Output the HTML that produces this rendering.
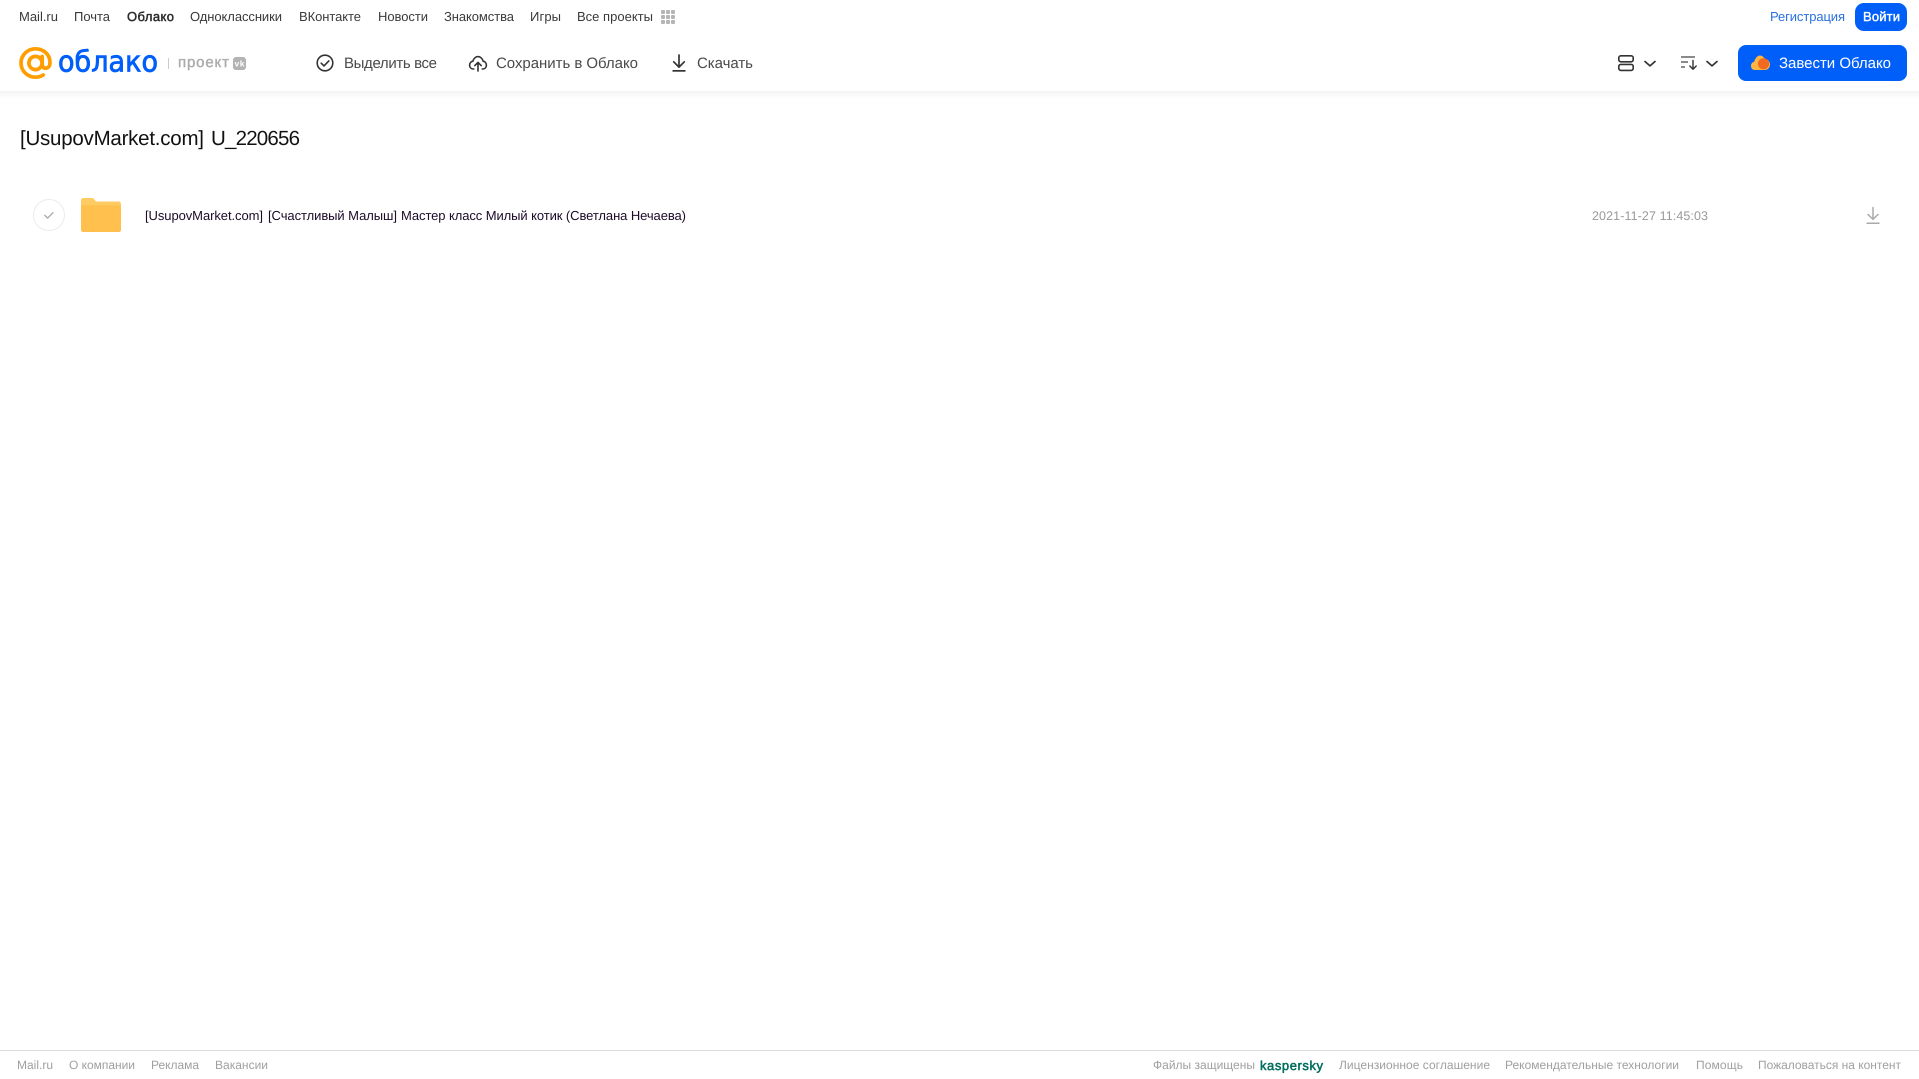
<!DOCTYPE html>
<html lang="ru"><head><meta charset="utf-8"><title>Облако</title>
<style>
html,body{margin:0;padding:0;background:#fff;width:1919px;height:1079px;overflow:hidden}
svg{display:block;position:absolute;left:0;top:0}
text{font-family:"Liberation Sans",Arial,sans-serif;text-rendering:geometricPrecision}
.n{font-size:13px;fill:#3a3a3a}
.a{font-size:15px;fill:#4a4a4a}
.f{font-size:12px;fill:#a0a0a0}
</style></head><body>
<svg width="1919" height="1079" viewBox="0 0 1919 1079" xmlns="http://www.w3.org/2000/svg">
<defs>
<linearGradient id="sh" x1="0" y1="0" x2="0" y2="1"><stop offset="0" stop-color="#f4f4f4"/><stop offset="1" stop-color="#fff"/></linearGradient>
</defs>
<rect x="0" y="91" width="1919" height="8" fill="url(#sh)"/>
<!-- top nav -->
<text class="n" x="19" y="21" textLength="39">Mail.ru</text>
<text class="n" x="74" y="21" textLength="36">Почта</text>
<text class="n" x="127" y="21" textLength="47" style="fill:#2a2a2a;stroke:#2a2a2a;stroke-width:.45">Облако</text>
<text class="n" x="190" y="21" textLength="92">Одноклассники</text>
<text class="n" x="299" y="21" textLength="62">ВКонтакте</text>
<text class="n" x="378" y="21" textLength="50">Новости</text>
<text class="n" x="444" y="21" textLength="70">Знакомства</text>
<text class="n" x="530" y="21" textLength="31">Игры</text>
<text class="n" x="577" y="21" textLength="76">Все проекты</text>
<g fill="#b5b5b5">
<rect x="661" y="10" width="4" height="4" rx="1"/><rect x="666" y="10" width="4" height="4" rx="1"/><rect x="671" y="10" width="4" height="4" rx="1"/>
<rect x="661" y="15" width="4" height="4" rx="1"/><rect x="666" y="15" width="4" height="4" rx="1"/><rect x="671" y="15" width="4" height="4" rx="1"/>
<rect x="661" y="20" width="4" height="4" rx="1"/><rect x="666" y="20" width="4" height="4" rx="1"/><rect x="671" y="20" width="4" height="4" rx="1"/>
</g>
<text x="1770" y="21" font-size="13" fill="#2a70e0" textLength="75">Регистрация</text>
<rect x="1855" y="3" width="52" height="28" rx="9" fill="#005ff9"/>
<text x="1863" y="21" font-size="13" fill="#fff" stroke="#fff" stroke-width=".4" textLength="37">Войти</text>
<!-- logo -->
<g fill="none" stroke="#ff9e00">
<circle cx="35.5" cy="63" r="6.6" stroke-width="3.7"/>
<path d="M42.2 56.5V64.5C42.2 69.8 50 69.8 50 62.5C50 54.5 43.5 48.8 35.5 48.8C27.5 48.8 21 55.2 21 63C21 71 27.5 77.2 35.5 77.2C38.6 77.2 41 76.4 43.2 75" stroke-width="3.7" stroke-linecap="round"/>
</g>
<text x="58" y="71.5" font-size="29" fill="#005ff9" stroke="#005ff9" stroke-width=".8" textLength="100" lengthAdjust="spacingAndGlyphs" style="font-family:'DejaVu Sans',sans-serif">облако</text>
<rect x="168" y="58" width="1" height="11" fill="#ccc"/>
<text x="178" y="67" font-size="15" fill="#ababab" stroke="#ababab" stroke-width=".4" textLength="51">проект</text>
<rect x="233" y="57" width="13" height="13" rx="3" fill="#b3b3b3"/>
<text x="234.5" y="66.5" font-size="8.5" font-weight="700" fill="#fff" textLength="10">vk</text>
<!-- actions -->
<circle cx="325" cy="63" r="7.8" fill="none" stroke="#333" stroke-width="1.6"/>
<path d="M321.2 63.2l2.8 2.7 4.8-5" fill="none" stroke="#333" stroke-width="1.6" stroke-linecap="round" stroke-linejoin="round"/>
<text class="a" x="344" y="68" textLength="93">Выделить все</text>
<path d="M473.8 69H473.5C471 69 469.6 67.2 469.6 65.2C469.6 63 471 61.5 472.9 61.2C473.5 58.6 475.6 56.6 478 56.6C480.4 56.6 482.5 58.6 483.1 61.2C485 61.5 486.4 63 486.4 65.2C486.4 67.2 485 69 482.5 69H482.2" fill="none" stroke="#333" stroke-width="1.6" stroke-linecap="round"/>
<path d="M478 71V62.5M474.8 65.6L478 62.4L481.2 65.6" fill="none" stroke="#333" stroke-width="1.6" stroke-linecap="round" stroke-linejoin="round"/>
<text class="a" x="496" y="68" textLength="142">Сохранить в Облако</text>
<path d="M679 55V67M673.7 61.8L679 67.1L684.3 61.8" fill="none" stroke="#333" stroke-width="1.7" stroke-linecap="round" stroke-linejoin="round"/>
<rect x="672.5" y="70" width="13" height="1.7" fill="#333"/>
<text class="a" x="697" y="68" textLength="56">Скачать</text>
<!-- right controls -->
<rect x="1618.8" y="55.8" width="14.4" height="6" rx="2" fill="none" stroke="#333" stroke-width="1.6"/>
<rect x="1618.8" y="64.4" width="14.4" height="6" rx="2" fill="none" stroke="#333" stroke-width="1.6"/>
<path d="M1645 61.5l5 4.4 5-4.4" fill="none" stroke="#333" stroke-width="1.7" stroke-linecap="round" stroke-linejoin="round"/>
<path d="M1681 57h14M1681 62h7M1681 67h4" fill="none" stroke="#444" stroke-width="1.3"/>
<path d="M1693 60.5v8.5M1689.8 66l3.2 3.2 3.2-3.2" fill="none" stroke="#333" stroke-width="1.4" stroke-linecap="round" stroke-linejoin="round"/>
<path d="M1707 61.5l5 4.4 5-4.4" fill="none" stroke="#333" stroke-width="1.7" stroke-linecap="round" stroke-linejoin="round"/>
<rect x="1738" y="45" width="169" height="36" rx="8" fill="#005ff9"/>
<path d="M1755 70C1752.5 70 1751 68.2 1751 66C1751 63.8 1752.4 62.2 1754.2 61.8C1755 58.8 1757 55.5 1760 55.5C1762.2 55.5 1763.8 57 1764.6 58.8C1767.6 59 1770 61.6 1770 64.6C1770 67.6 1767.6 70 1764.6 70Z" fill="#ffb53f"/>
<circle cx="1763.5" cy="63.8" r="5.6" fill="#f26a21"/>
<text x="1779" y="68" font-size="15" fill="#fff" textLength="112">Завести Облако</text>
<!-- title -->
<text x="20" y="145" font-size="20.5" fill="#111" textLength="184">[UsupovMarket.com]</text>
<text x="211" y="145" font-size="20.5" fill="#111" textLength="89">U_220656</text>
<!-- row -->
<circle cx="49" cy="215" r="15.5" fill="#fff" stroke="#ececec" stroke-width="1"/>
<path d="M44.8 215.3l2.9 2.8 5.3-5.4" fill="none" stroke="#a6a6a6" stroke-width="1.3" stroke-linecap="round" stroke-linejoin="round"/>
<path d="M81 200.5C81 199 82 198 83.5 198H91.5C93 198 93.8 198.6 94.6 199.6L95.8 201.5H118.5C120 201.5 121 202.5 121 204V229.5C121 231 120 232 118.5 232H83.5C82 232 81 231 81 229.5Z" fill="#ffcb63"/>
<path d="M81 207.5C81 206.3 82 205.3 83.2 205.3H118.8C120 205.3 121 206.3 121 207.5V229.5C121 231 120 232 118.5 232H83.5C82 232 81 231 81 229.5Z" fill="#ffc04e"/>
<text x="145" y="220" font-size="13" fill="#1c0a28" textLength="118">[UsupovMarket.com]</text>
<text x="268" y="220" font-size="13" fill="#1c0a28" textLength="129">[Счастливый Малыш]</text>
<text x="401" y="220" font-size="13" fill="#1c0a28" textLength="285">Мастер класс Милый котик (Светлана Нечаева)</text>
<text x="1592" y="220" font-size="12.5" fill="#999" textLength="116">2021-11-27 11:45:03</text>
<path d="M1873 207.5V219M1868 214.5L1873 219.3L1878 214.5" fill="none" stroke="#aaa" stroke-width="1.5" stroke-linecap="round" stroke-linejoin="round"/>
<rect x="1866.5" y="222.5" width="13" height="1.5" fill="#aaa"/>
<!-- footer -->
<rect x="0" y="1050" width="1919" height="1" fill="#dcdcdc"/>
<text class="f" x="17" y="1069" textLength="36">Mail.ru</text>
<text class="f" x="69" y="1069" textLength="66">О компании</text>
<text class="f" x="151" y="1069" textLength="48">Реклама</text>
<text class="f" x="215" y="1069" textLength="53">Вакансии</text>
<text class="f" x="1153" y="1069" textLength="102">Файлы защищены</text>
<text x="1260" y="1070" font-size="13" fill="#006d5c" stroke="#006d5c" stroke-width=".5" textLength="63">kaspersky</text>
<text class="f" x="1339" y="1069" textLength="151">Лицензионное соглашение</text>
<text class="f" x="1505" y="1069" textLength="174">Рекомендательные технологии</text>
<text class="f" x="1696" y="1069" textLength="47">Помощь</text>
<text class="f" x="1758" y="1069" textLength="143">Пожаловаться на контент</text>
</svg>
</body></html>
